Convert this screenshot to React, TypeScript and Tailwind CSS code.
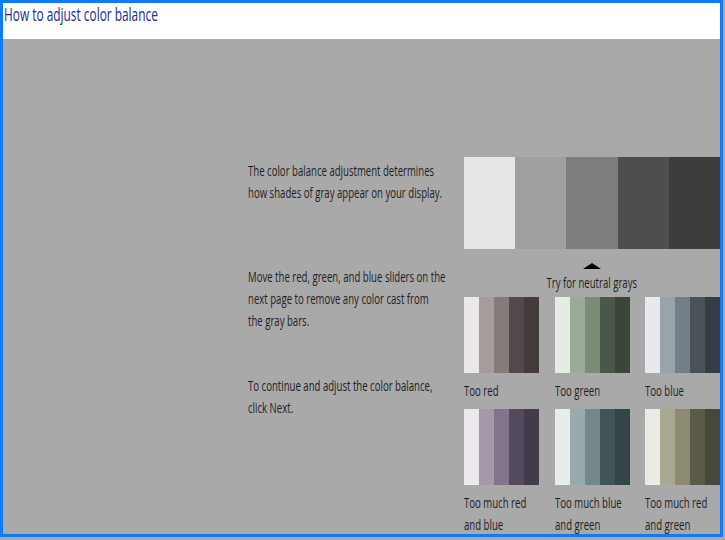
import React from 'react';

const grayBar = ['#e6e6e6', '#a0a0a0', '#7d7d7d', '#4e4e4e', '#3d3d3d'];

const swatches = [
  { label: ['Too red'], colors: ['#ebe8e8', '#a69c9c', '#857b78', '#524a4a', '#433c3a'] },
  { label: ['Too green'], colors: ['#e6ebe6', '#9caa9a', '#7a8c76', '#4a5749', '#3b463a'] },
  { label: ['Too blue'], colors: ['#e8e9ec', '#9aa3aa', '#737e86', '#4a525a', '#353c43'] },
  { label: ['Too much red', 'and blue'], colors: ['#ebe8ee', '#a598a8', '#82748a', '#534a5c', '#433a4a'] },
  { label: ['Too much blue', 'and green'], colors: ['#e8eced', '#98aaab', '#748888', '#425556', '#354444'] },
  { label: ['Too much red', 'and green'], colors: ['#ebebe6', '#aaa890', '#8c8a70', '#5a5a48', '#48483a'] },
];

const Line: React.FC<{ children: React.ReactNode; center?: boolean }> = ({ children, center }) => (
  <div className={`h-[22px] leading-[22px] whitespace-nowrap ${center ? 'text-center' : ''}`}>
    <span className={`inline-block scale-x-[0.64] ${center ? 'origin-center' : 'origin-left'}`}>{children}</span>
  </div>
);

const Swatch: React.FC<{ label: string[]; colors: string[] }> = ({ label, colors }) => (
  <div className="w-[75px]">
    <div className="flex h-[76px]">
      {colors.map((c) => (
        <div key={c} className="w-[15px] h-full" style={{ backgroundColor: c }} />
      ))}
    </div>
    <div className="mt-[6px]">
      {label.map((l) => (
        <Line key={l}>{l}</Line>
      ))}
    </div>
  </div>
);

export default function App() {
  return (
    <div className="w-[725px] h-[540px] bg-[#a9a9a9] font-['Open_Sans',sans-serif]">
      <div className="w-[723px] h-[537px] border-[3px] border-[#0f7bf7] flex flex-col">
        <div className="h-[36px] bg-white shrink-0 pl-[1px]">
          <div className="h-[22px] leading-[22px] whitespace-nowrap text-[18px] text-[#1c2a8c]">
            <span className="inline-block origin-left scale-x-[0.66]">How to adjust color balance</span>
          </div>
        </div>
        <div className="flex-1 flex text-[15px] text-[#1e1e1e]">
          <div className="w-[216px] ml-[245px] pt-[120px]">
            <Line>The color balance adjustment determines</Line>
            <Line>how shades of gray appear on your display.</Line>
            <div className="mt-[62px]">
              <Line>Move the red, green, and blue sliders on the</Line>
              <Line>next page to remove any color cast from</Line>
              <Line>the gray bars.</Line>
            </div>
            <div className="mt-[43px]">
              <Line>To continue and adjust the color balance,</Line>
              <Line>click Next.</Line>
            </div>
          </div>
          <div className="w-[256px] pt-[118px]">
            <div className="flex h-[92px]">
              {grayBar.map((c) => (
                <div key={c} className="flex-1" style={{ backgroundColor: c }} />
              ))}
            </div>
            <div className="flex justify-center mt-[14px]">
              <svg width="18" height="6" viewBox="0 0 18 6">
                <polygon points="9,0 18,6 0,6" fill="#000" />
              </svg>
            </div>
            <div className="mt-[2px]">
              <Line center>Try for neutral grays</Line>
            </div>
            <div className="grid grid-cols-[75px_75px_75px] gap-x-[15.5px] gap-y-[8px] mt-[4px]">
              {swatches.map((s) => (
                <Swatch key={s.label.join(' ')} label={s.label} colors={s.colors} />
              ))}
            </div>
          </div>
        </div>
      </div>
    </div>
  );
}
